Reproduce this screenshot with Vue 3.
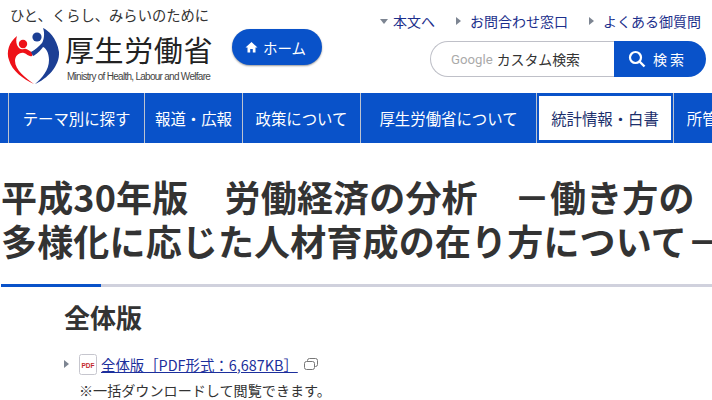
<template>
  <div class="page">
    <header class="head">
      <div class="brand">
        <p class="tagline">ひと、くらし、みらいのために</p>
        <div class="logo">
          <svg class="mark" width="54" height="60" viewBox="6 26 54 60">
            <path d="M17 36C9 42 6 52 9 60C12 71 23 79 34 84C26 78 15 70 15 61C15 56 19 52 24 53C27 54 29 57 32 56L33 53C29 51 27 48 24 49C21 50 19 49 17 45C16 42 16 39 17 36Z" fill="#ee1118" />
            <circle cx="23" cy="44" r="4.200" fill="#ee1118" />
            <path d="M43 28C48 30 57 38 59 52C60 66 47 79 35 84C42 78 49 70 49 60C49 53 46 48 43 47C41 50 36 55 33 56L31 52C35 50 39 46 42 43C44 40 45 33 43 28Z" fill="#1c3f94" />
            <circle cx="37" cy="37" r="4.600" fill="#1c3f94" />
          </svg>
          <div class="name">
            <strong>厚生労働省</strong>
            <small>Ministry of Health, Labour and Welfare</small>
          </div>
        </div>
      </div>
      <a class="home">
        <svg width="13" height="12" viewBox="0 0 13 12"><path d="M6.500 1L12.500 6.500H10.500V11.500H7.800V8H5.200V11.500H2.500V6.500H.5Z" fill="#fff" /></svg>
        ホーム
      </a>
      <div class="tools">
        <ul class="sublinks">
          <li><i class="tri down"></i>本文へ</li>
          <li><i class="tri"></i>お問合わせ窓口</li>
          <li><i class="tri"></i>よくある御質問</li>
        </ul>
        <div class="search">
          <div class="field"><span class="google">Google</span> カスタム検索</div>
          <button class="go">
            <svg width="18" height="18" viewBox="0 0 18 18"><circle cx="7.500" cy="7.500" r="5.500" fill="none" stroke="#fff" stroke-width="2.200" /><path d="M11.500 11.500L16.500 16.500" stroke="#fff" stroke-width="2.400" /></svg>
            <span>検索</span>
          </button>
        </div>
      </div>
    </header>

    <nav class="nav">
      <a v-for="item in navItems" :key="item.label" :class="{ current: item.current }" :style="{ width: item.width + 'px' }">{{ item.label }}</a>
    </nav>

    <main>
      <h1>平成30年版　労働経済の分析　－働き方の多様化に応じた人材育成の在り方について－</h1>
      <div class="rule"><span></span></div>
      <section class="body">
        <h2>全体版</h2>
        <div class="entry">
          <i class="tri"></i>
          <svg class="pdf" width="18" height="21" viewBox="0 0 18 21">
            <rect x=".5" y=".5" width="17" height="20" rx="2" fill="#fff" stroke="#c6c6ce" />
            <text x="9" y="14" text-anchor="middle" font-size="8" font-weight="700" textLength="13" lengthAdjust="spacingAndGlyphs" fill="#c4282c" font-family="Liberation Sans, sans-serif">PDF</text>
          </svg>
          <a class="link">全体版［PDF形式：6,687KB］</a>
          <svg class="ext" width="14" height="12" viewBox="0 0 14 12">
            <rect x="3.500" y=".5" width="10" height="8" rx="2" fill="none" stroke="#777" />
            <rect x=".5" y="3.500" width="10" height="8" rx="2" fill="#fff" stroke="#777" />
          </svg>
        </div>
        <p class="note">※一括ダウンロードして閲覧できます。</p>
      </section>
    </main>
  </div>
</template>

<script setup>
const navItems = [
  { label: 'テーマ別に探す', width: 136 },
  { label: '報道・広報', width: 98 },
  { label: '政策について', width: 118 },
  { label: '厚生労働省について', width: 176 },
  { label: '統計情報・白書', width: 137, current: true },
  { label: '所管の法令等', width: 119 }
]
</script>

<style>
html, body {
  overflow: hidden;
  background: #fff;
}
</style>

<style scoped>
.page {
  width: 712px;
  height: 400px;
  overflow: hidden;
  font-family: "Noto Sans CJK JP", "Noto Sans", sans-serif;
  color: #333;
}
.head {
  display: flex;
  height: 93px;
}
.brand {
  width: 232px;
  padding: 6px 0 0 10px;
  box-sizing: border-box;
}
.tagline {
  margin: 0;
  font-size: 14.300px;
  line-height: 18px;
  color: #333;
}
.logo {
  display: flex;
  margin: 2px 0 0 -4px;
}
.name {
  margin-left: 5px;
  display: flex;
  flex-direction: column;
}
.name strong {
  font-size: 29px;
  font-weight: 400;
  line-height: 30px;
  margin-top: 8px;
  letter-spacing: .6px;
  color: #222;
}
.name small {
  font-family: "Liberation Sans", sans-serif;
  font-size: 10px;
  line-height: 12px;
  letter-spacing: -.72px;
  color: #444;
  margin: 7px 0 0 2px;
  white-space: nowrap;
}
.home {
  align-self: flex-start;
  margin-top: 29px;
  width: 90px;
  height: 36px;
  padding-left: 13px;
  box-sizing: border-box;
  border-radius: 18px;
  background: #0952c9;
  box-shadow: 0 1px 2px #999;
  color: #fff;
  font-size: 14.500px;
  display: flex;
  align-items: center;
  gap: 5px;
}
.tools {
  margin-left: auto;
  display: flex;
  flex-direction: column;
  align-items: flex-end;
  padding: 11px 6px 0 0;
}
.sublinks {
  list-style: none;
  margin: 0 5px 0 0;
  padding: 0;
  display: flex;
  font-size: 14px;
  line-height: 20px;
  color: #1c2f8c;
}
.sublinks li {
  display: flex;
  align-items: center;
  margin-left: 21px;
}
.tri {
  display: inline-block;
  width: 0;
  height: 0;
  border-left: 5px solid #7d8592;
  border-top: 4px solid transparent;
  border-bottom: 4px solid transparent;
  margin-right: 9px;
}
.tri.down {
  border-top: 5px solid #7d8592;
  border-left: 4px solid transparent;
  border-right: 4px solid transparent;
  border-bottom: 0;
  margin-right: 5px;
}
.search {
  display: flex;
  margin-top: 10px;
  height: 36px;
}
.field {
  width: 184px;
  box-sizing: border-box;
  border: 1px solid #bfc0c8;
  border-right: 0;
  border-radius: 18px 0 0 18px;
  padding-left: 20px;
  display: flex;
  align-items: center;
  gap: 4px;
  font-size: 13.900px;
  color: #333;
}
.google {
  font-family: Roboto, "Liberation Sans", sans-serif;
  color: #aaa;
  font-size: 13.200px;
}
.go {
  width: 92px;
  border: 0;
  padding: 0;
  border-radius: 0 18px 18px 0;
  background: #0952c9;
  color: #fff;
  font-family: inherit;
  font-size: 14px;
  display: flex;
  align-items: center;
  justify-content: center;
  gap: 7px;
  padding-right: 5px;
  letter-spacing: 3px;
}
.nav {
  display: flex;
  height: 50px;
  padding-left: 8px;
  background: #0952c9;
}
.nav a {
  flex: none;
  box-sizing: border-box;
  border-left: 1px solid #bcc3d0;
  display: flex;
  align-items: center;
  justify-content: center;
  color: #fff;
  font-size: 15.400px;
  white-space: nowrap;
}
.nav a.current {
  padding: 3px 2px 3px 2px;
  background: #fff;
  background-clip: content-box;
  color: #1c2f6c;
  box-shadow: inset -1px 0 0 #0952c9;
}
h1 {
  margin: 31px 0 0 1px;
  width: 724px;
  font-size: 36px;
  line-height: 44px;
  font-weight: 700;
  letter-spacing: .16px;
  color: #333;
}
.rule {
  margin-top: 22px;
  height: 3px;
  margin-left: 1px;
  background: #d0d1dd;
}
.rule span {
  display: block;
  width: 100px;
  height: 3px;
  background: #0952c9;
}
.body {
  padding-left: 64px;
}
h2 {
  margin: 14px 0 0;
  font-size: 26px;
  line-height: 32px;
  font-weight: 700;
  color: #333;
}
.entry {
  display: flex;
  align-items: center;
  margin-top: 20px;
  height: 22px;
  font-size: 14.400px;
}
.entry .tri {
  margin-right: 10px;
}
.link {
  margin-left: 4px;
  color: #1c2f9c;
  text-decoration: underline;
}
.ext {
  margin-left: 6px;
}
.note {
  margin: 5px 0 0 15px;
  font-size: 14.100px;
  line-height: 20px;
}
</style>
